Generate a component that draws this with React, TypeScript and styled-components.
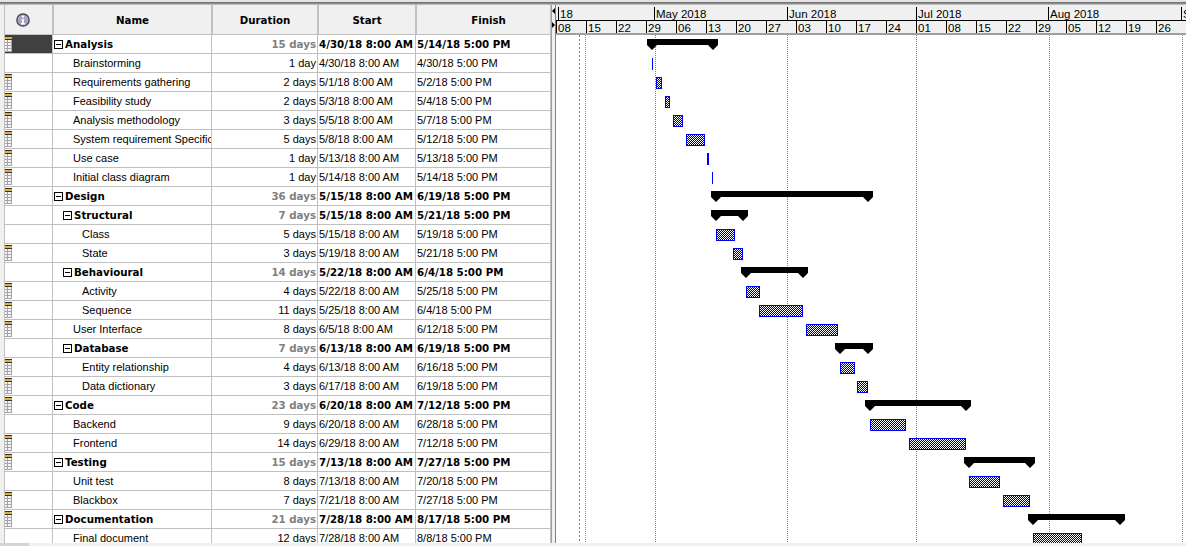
import React from "react";
import styled, { createGlobalStyle } from "styled-components";

const Global = createGlobalStyle`
  html, body { margin: 0; padding: 0; background: #fff; overflow: hidden; }
  body { font-family: "Liberation Sans", sans-serif; }
`;

type Task = {
  name: string; level: number; summary?: boolean; note?: boolean;
  dur: string; start: string; finish: string;
  s: [number, number]; f: [number, number];
};

const t = (name: string, level: number, summary: boolean, note: boolean, dur: string, start: string, finish: string): Task => {
  const parse = (v: string): [number, number] => { const [m, d] = v.split("/").map(Number); return [m, d]; };
  return { name, level, summary, note, dur, start: `${start} 8:00 AM`, finish: `${finish} 5:00 PM`, s: parse(start), f: parse(finish) };
};

const tasks: Task[] = [
  t("Analysis", 0, true, true, "15 days", "4/30/18", "5/14/18"),
  t("Brainstorming", 1, false, false, "1 day", "4/30/18", "4/30/18"),
  t("Requirements gathering", 1, false, true, "2 days", "5/1/18", "5/2/18"),
  t("Feasibility study", 1, false, true, "2 days", "5/3/18", "5/4/18"),
  t("Analysis methodology", 1, false, true, "3 days", "5/5/18", "5/7/18"),
  t("System requirement Specification", 1, false, true, "5 days", "5/8/18", "5/12/18"),
  t("Use case", 1, false, true, "1 day", "5/13/18", "5/13/18"),
  t("Initial class diagram", 1, false, true, "1 day", "5/14/18", "5/14/18"),
  t("Design", 0, true, true, "36 days", "5/15/18", "6/19/18"),
  t("Structural", 1, true, false, "7 days", "5/15/18", "5/21/18"),
  t("Class", 2, false, false, "5 days", "5/15/18", "5/19/18"),
  t("State", 2, false, true, "3 days", "5/19/18", "5/21/18"),
  t("Behavioural", 1, true, false, "14 days", "5/22/18", "6/4/18"),
  t("Activity", 2, false, true, "4 days", "5/22/18", "5/25/18"),
  t("Sequence", 2, false, true, "11 days", "5/25/18", "6/4/18"),
  t("User Interface", 1, false, true, "8 days", "6/5/18", "6/12/18"),
  t("Database", 1, true, false, "7 days", "6/13/18", "6/19/18"),
  t("Entity relationship", 2, false, true, "4 days", "6/13/18", "6/16/18"),
  t("Data dictionary", 2, false, true, "3 days", "6/17/18", "6/19/18"),
  t("Code", 0, true, true, "23 days", "6/20/18", "7/12/18"),
  t("Backend", 1, false, false, "9 days", "6/20/18", "6/28/18"),
  t("Frontend", 1, false, true, "14 days", "6/29/18", "7/12/18"),
  t("Testing", 0, true, true, "15 days", "7/13/18", "7/27/18"),
  t("Unit test", 1, false, false, "8 days", "7/13/18", "7/20/18"),
  t("Blackbox", 1, false, true, "7 days", "7/21/18", "7/27/18"),
  t("Documentation", 0, true, true, "21 days", "7/28/18", "8/17/18"),
  t("Final document", 1, false, false, "12 days", "7/28/18", "8/8/18"),
];

const monthStart: Record<number, number> = { 4: -30, 5: 0, 6: 31, 7: 61, 8: 92 };
const PX_DAY = 30 / 7;
const ORIGIN = 98.5; // x of May 1 inside the chart
const dayX = (m: number, d: number, hour: number) => ORIGIN + (monthStart[m] + d - 1 + hour / 24) * PX_DAY;

const weeks = ["08","15","22","29","06","13","20","27","03","10","17","24","01","08","15","22","29","05","12","19","26"];
const months = [
  { label: "18", width: 96 },
  { label: "May 2018", width: 133 },
  { label: "Jun 2018", width: 129 },
  { label: "Jul 2018", width: 132 },
  { label: "Aug 2018", width: 133 },
  { label: "S", width: 30 },
];

const REGULAR = `11px "Liberation Sans", sans-serif`;
const BOLD = `bold 10.25px "DejaVu Sans", sans-serif`;

const Page = styled.div`
  width: 1186px; height: 546px; display: flex; flex-direction: column; overflow: hidden; background: #fff;
`;
const TopBar = styled.div`
  height: 5px; flex: none;
  background: linear-gradient(#e4e4e4 0 2px, #707070 2px 3px, #909090 3px 4px, #b8b8b8 4px 5px);
`;
const Body = styled.div`
  flex: 1; display: flex; min-height: 0;
`;
const LeftGutter = styled.div`
  width: 5px; flex: none; background: #f0f0f0; box-sizing: border-box; border-right: 1px solid #c0c0c0;
`;
const TablePane = styled.div`
  width: 546px; flex: none; overflow: hidden; display: flex; flex-direction: column;
`;
const Grid = styled.div`
  display: grid; grid-template-columns: 48px 159px 106px 98px 135px;
`;
const HeadCell = styled.div<{ $pad?: string }>`
  height: 30px; box-sizing: border-box; background: #f0f0f0; border-right: 1px solid #c0c0c0;
  border-bottom: 1px solid #c0c0c0; display: flex; align-items: center; justify-content: center;
  font: ${BOLD}; color: #000;
  padding: ${(p) => p.$pad ?? "0"};
  & + & { border-left: 1px solid #c0c0c0; }
  &:last-of-type { border-right: none; }
`;
const Cell = styled.div<{ $align?: string; $bold?: boolean; $muted?: boolean; $dark?: boolean }>`
  height: 19px; box-sizing: border-box; border-right: 1px solid #c0c0c0; border-bottom: 1px solid #c0c0c0;
  display: flex; align-items: center; overflow: hidden; white-space: nowrap; position: relative;
  justify-content: ${(p) => (p.$align === "right" ? "flex-end" : "flex-start")};
  padding: 0 1px;
  font: ${(p) => (p.$bold ? BOLD : REGULAR)};
  color: ${(p) => (p.$muted ? "#808080" : "#000")};
  background: ${(p) => (p.$dark ? "#404040" : "#fff")};
`;
const NameInner = styled.span<{ $indent: number }>`
  padding-left: ${(p) => p.$indent}px; display: inline-flex; align-items: center; gap: 2px;
`;
const Toggle = styled.span`
  width: 9px; height: 9px; box-sizing: border-box; border: 1px solid #000; flex: none; position: relative; background: #fff;
  &::after { content: ""; position: absolute; left: 1px; right: 1px; top: 3px; height: 1px; background: #000; }
`;
const NoteMark = styled.svg`
  position: absolute; left: 0; top: 1px;
`;
const ChartDivider = styled.div`
  width: 5px; flex: none; box-sizing: border-box; background: #f0f0f0;
  border-left: 1px solid #a0a0a0; border-right: 1px solid #808080; position: relative;
`;
const Arrow = styled.span<{ $y: number; $left?: boolean }>`
  position: absolute; top: ${(p) => p.$y}px; left: 0; width: 0; height: 0;
  border-top: 3px solid transparent; border-bottom: 3px solid transparent;
  ${(p) => (p.$left ? "border-right: 3px solid #000;" : "border-left: 3px solid #000;")}
`;
const ChartPane = styled.div`
  flex: 1; display: flex; flex-direction: column; min-width: 0; overflow: hidden;
`;
const TimeHead = styled.div`
  height: 30px; flex: none; box-sizing: border-box; background: #f0f0f0; border-bottom: 2px solid #a0a0a0;
  display: flex; flex-direction: column; overflow: hidden;
`;
const TimeRow = styled.div`
  display: flex; height: 15px; flex: none; margin-left: 2px; padding-top: 2px; box-sizing: border-box;
`;
const WeekRow = styled.div`
  display: flex; height: 13px; flex: none; box-sizing: border-box; border-top: 1px solid #000;
`;
const MonthCell = styled.div<{ $w: number }>`
  width: ${(p) => p.$w}px; flex: none; box-sizing: border-box; border-left: 1px solid #000;
  padding-left: 1px; font: 11.5px/14px "Liberation Sans", sans-serif; color: #000; white-space: nowrap; overflow: hidden;
`;
const WeekCell = styled.div`
  width: 30px; flex: none; box-sizing: border-box; border-left: 1px solid #000;
  padding-left: 1px; font: 11.5px/15px "Liberation Sans", sans-serif; color: #000;
`;
const ChartSvg = styled.svg`
  display: block; flex: none;
`;
const BottomBar = styled.div`
  height: 3px; flex: none; background: #f0f0f0; display: flex;
`;
const ScrollStub = styled.div`
  width: 29px; background: #d4d4d4;
`;

const NoteIcon = () => (
  <NoteMark width="7" height="16" viewBox="0 0 7 16">
    <rect x="0" y="0" width="7" height="16" fill="#a4a4a4" />
    <rect x="0" y="0" width="7" height="1" fill="#303030" />
    <rect x="0" y="1" width="7" height="2" fill="#e8b030" />
    <rect x="0" y="3" width="7" height="1" fill="#303030" />
    {[4, 7, 10, 13].map((y) => [0, 3, 5].map((x) => <rect key={`${x}-${y}`} x={x} y={y} width={x === 5 ? 1 : 2} height="2" fill="#f4f4f4" />))}
  </NoteMark>
);

const InfoIcon = () => (
  <svg width="14" height="14" viewBox="0 0 14 14">
    <circle cx="7" cy="7" r="6.2" fill="#a9a4bd" stroke="#3c3a4e" strokeWidth="1.2" />
    <circle cx="7" cy="3.6" r="1.2" fill="#fff" />
    <path d="M5.8 6h2v4h1v1.4H5v-1.4h1V7.2h-.2z" fill="#fff" />
  </svg>
);

const ROW = 19;
const chartW = 630;
const chartH = 508;

const Summary = ({ x1, x2, y }: { x1: number; x2: number; y: number }) => {
  const top = y + 4;
  const l = x1 - 5, r = x2 + 5;
  return (
    <path
      fill="#000"
      d={`M${l} ${top}H${r}V${top + 6}L${r - 5} ${top + 11}L${r - 10} ${top + 6}H${l + 10}L${l + 5} ${top + 11}L${l} ${top + 6}Z`}
    />
  );
};

const Gantt = () => (
  <ChartSvg width={chartW} height={chartH} viewBox={`0 0 ${chartW} ${chartH}`}>
    <defs>
      <pattern id="hatch" width="2" height="2" patternUnits="userSpaceOnUse">
        <rect width="2" height="2" fill="#fff" />
        <rect width="1" height="1" fill="#000050" />
        <rect x="1" y="1" width="1" height="1" fill="#000050" />
      </pattern>
    </defs>
    <line x1="23.5" x2="23.5" y1="0" y2={chartH} stroke="#808080" strokeDasharray="2 2" />
    <line x1="29.5" x2="29.5" y1="0" y2={chartH} stroke="#30d030" strokeDasharray="1 1" />
    {[99, 231, 360, 493, 626].map((x) => (
      <line key={x} x1={x + 0.5} x2={x + 0.5} y1="0" y2={chartH} stroke="#808080" strokeDasharray="1 1" />
    ))}
    {tasks.map((task, i) => {
      const y = i * ROW;
      const x1 = Math.round(dayX(task.s[0], task.s[1], 8));
      const x2 = Math.round(dayX(task.f[0], task.f[1], 17));
      if (task.summary) return <Summary key={i} x1={x1} x2={x2} y={y} />;
      const w = x2 - x1;
      if (w <= 2) return <rect key={i} x={x1} y={y + 4} width={w} height="12" fill="#0000ff" />;
      return (
        <rect key={i} x={x1 + 0.5} y={y + 4.5} width={w - 1} height={11} fill="url(#hatch)" stroke="#0000ff" />
      );
    })}
  </ChartSvg>
);

export default function App() {
  return (
    <Page>
      <Global />
      <TopBar />
      <Body>
        <LeftGutter />
        <TablePane>
          <Grid>
            <HeadCell $pad="0 11px 0 0"><InfoIcon /></HeadCell>
            <HeadCell>Name</HeadCell>
            <HeadCell>Duration</HeadCell>
            <HeadCell>Start</HeadCell>
            <HeadCell $pad="0 0 0 10px">Finish</HeadCell>
            {tasks.map((task, i) => {
              const indent = task.summary ? task.level * 9 : (task.level === 1 ? 19 : 28);
              return (
                <React.Fragment key={i}>
                  <Cell $dark={i === 0}>{task.note && <NoteIcon />}</Cell>
                  <Cell $bold={task.summary}>
                    <NameInner $indent={indent}>
                      {task.summary && <Toggle />}
                      {task.name}
                    </NameInner>
                  </Cell>
                  <Cell $align="right" $bold={task.summary} $muted={task.summary}>{task.dur}</Cell>
                  <Cell $bold={task.summary}>{task.start}</Cell>
                  <Cell $bold={task.summary}>{task.finish}</Cell>
                </React.Fragment>
              );
            })}
          </Grid>
        </TablePane>
        <ChartDivider>
          <Arrow $y={3} $left />
          <Arrow $y={17} />
        </ChartDivider>
        <ChartPane>
          <TimeHead>
            <TimeRow>{months.map((m) => <MonthCell key={m.label} $w={m.width}>{m.label}</MonthCell>)}</TimeRow>
            <WeekRow>{weeks.map((w, i) => <WeekCell key={i}>{w}</WeekCell>)}</WeekRow>
          </TimeHead>
          <Gantt />
        </ChartPane>
      </Body>
      <BottomBar><ScrollStub /></BottomBar>
    </Page>
  );
}
